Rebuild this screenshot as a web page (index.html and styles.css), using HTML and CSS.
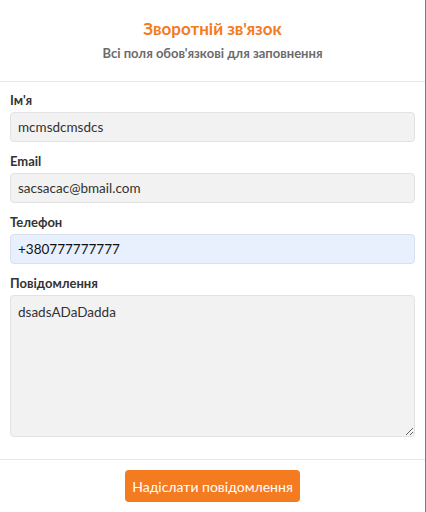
FILE: index.html
```html
<!DOCTYPE html>
<html lang="uk">
<head>
  <meta charset="UTF-8">
  <title>Зворотній зв'язок</title>
  <link rel="stylesheet" href="styles.css">
</head>
<body>

  <div class="modal">
    <div class="modal-header">
      <h2>Зворотній зв'язок</h2>
      <p class="subtitle">Всі поля обов'язкові для заповнення</p>
    </div>

    <form class="modal-body">
      <div class="field">
        <label for="name">Ім'я</label>
        <input type="text" id="name" value="mcmsdcmsdcs">
      </div>
      <div class="field">
        <label for="email">Email</label>
        <input type="email" id="email" value="sacsacac@bmail.com">
      </div>
      <div class="field">
        <label for="phone">Телефон</label>
        <input type="tel" id="phone" class="autofilled" value="+380777777777">
      </div>
      <div class="field">
        <label for="message">Повідомлення</label>
        <textarea id="message">dsadsADaDadda</textarea>
      </div>
    </form>

    <div class="modal-footer">
      <button type="button">Надіслати повідомлення</button>
    </div>
  </div>

</body>
</html>
```

FILE: styles.css
```css
* {
  box-sizing: border-box;
  margin: 0;
  padding: 0;
}

body {
  font-family: Lato, 'Noto Sans', sans-serif;
  background: #fff;
  color: #333;
  height: 512px;
  overflow: hidden;
}

.modal {
  width: 426px;
  height: 512px;
  border-right: 1px solid #7a7a7a;
  display: flex;
  flex-direction: column;
}

.modal-header {
  text-align: center;
  padding: 18px 10px 0;
  height: 82px;
  border-bottom: 1px solid #e6e6e6;
}

.modal-header h2 {
  font-size: 17px;
  font-weight: 700;
  color: #f47b20;
  line-height: 22px;
}

.subtitle {
  margin-top: 2px;
  font-size: 13px;
  font-weight: 700;
  color: #6b6b6b;
  line-height: 22px;
}

.modal-body {
  padding: 9px 10px 22px;
  border-bottom: 1px solid #e6e6e6;
}

.field {
  margin-bottom: 10px;
}

.field:last-child {
  margin-bottom: 0;
}

label {
  display: block;
  font-size: 13px;
  font-weight: 700;
  color: #333;
  line-height: 18px;
  margin-bottom: 3px;
}

input,
textarea {
  display: block;
  width: 100%;
  height: 30px;
  padding: 0 7px;
  font-family: Lato, 'Noto Sans', sans-serif;
  font-size: 13.5px;
  color: #333;
  background: #f2f2f2;
  border: 1px solid #e2e2e2;
  border-radius: 4px;
  outline: none;
}

input.autofilled {
  background: #e8f0fe;
  border-color: #d6e0ee;
  color: #111;
}

textarea {
  height: 142px;
  padding: 7px;
  line-height: 18px;
  resize: vertical;
}

.modal-footer {
  padding: 10px;
  display: flex;
  justify-content: center;
}

button {
  width: 175px;
  height: 32px;
  background: #f47b20;
  color: #fff;
  border: none;
  border-radius: 4px;
  font-family: Lato, 'Noto Sans', sans-serif;
  font-size: 14px;
  cursor: pointer;
}
```
